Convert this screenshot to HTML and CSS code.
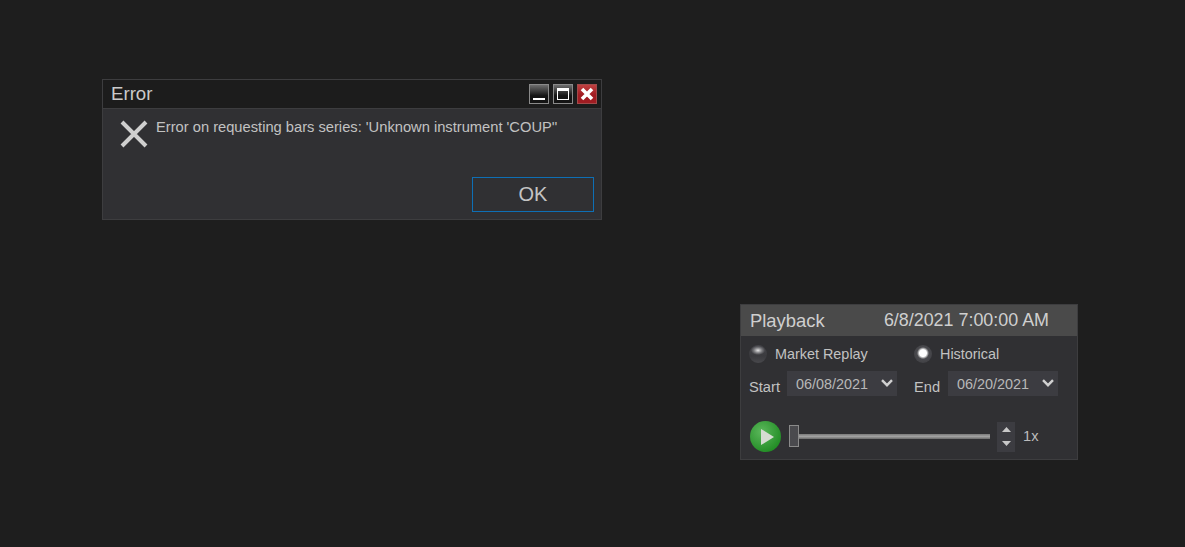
FILE: index.html
```html
<!DOCTYPE html>
<html lang="en">
<head>
<meta charset="utf-8">
<title>Error and Playback</title>
<link rel="stylesheet" href="styles.css">
</head>
<body>
<section class="window error-window">
  <header class="error-title">
    <span class="error-title-text">Error</span>
    <div class="win-buttons">
      <button class="win-btn" aria-label="Minimize"><svg width="18" height="18" viewBox="0 0 18 18"><rect x="3" y="13" width="12" height="2" fill="#fff"/></svg></button>
      <button class="win-btn" aria-label="Maximize"><svg width="18" height="18" viewBox="0 0 18 18"><path d="M3 3h12v12H3zM4 6v8h10V6z" fill="#fff" fill-rule="evenodd"/></svg></button>
      <button class="win-btn win-close" aria-label="Close"><svg width="18" height="18" viewBox="0 0 18 18"><path d="M4 4l10 10M14 4L4 14" stroke="#fff" stroke-width="3.6" fill="none"/></svg></button>
    </div>
  </header>
  <div class="error-body">
    <div class="error-message">
      <svg class="error-icon" width="30" height="30" viewBox="0 0 30 30"><path d="M3 3l24 24M27 3L3 27" stroke="#cfcfcf" stroke-width="4" fill="none"/></svg>
      <p class="error-text">Error on requesting bars series: 'Unknown instrument 'COUP''</p>
    </div>
    <div class="error-actions"><button class="ok-btn">OK</button></div>
  </div>
</section>

<section class="window playback-window">
  <header class="playback-title">
    <span class="playback-name">Playback</span>
    <span class="playback-time">6/8/2021 7:00:00 AM</span>
  </header>
  <div class="playback-body">
    <div class="mode-grid">
      <label class="radio-row"><span class="radio radio-off"></span>Market Replay</label>
      <label class="radio-row"><span class="radio radio-on"></span>Historical</label>
      <div class="date-row">
        <span class="date-label">Start</span>
        <div class="date-select"><span>06/08/2021</span><svg width="12" height="8" viewBox="0 0 12 8"><path d="M1 1.2l5 5 5-5" stroke="#d0d0d0" stroke-width="2.4" fill="none"/></svg></div>
      </div>
      <div class="date-row date-row-end">
        <span class="date-label">End</span>
        <div class="date-select"><span>06/20/2021</span><svg width="12" height="8" viewBox="0 0 12 8"><path d="M1 1.2l5 5 5-5" stroke="#d0d0d0" stroke-width="2.4" fill="none"/></svg></div>
      </div>
    </div>
    <div class="transport">
      <button class="play-btn" aria-label="Play"><svg width="13" height="16" viewBox="0 0 13 16"><path d="M0 0l13 8L0 16z" fill="#d6dcd2"/></svg></button>
      <div class="slider"><div class="slider-track"></div><div class="slider-thumb"></div></div>
      <div class="spinner">
        <svg width="9" height="5" viewBox="0 0 9 5"><path d="M0 5l4.5-5L9 5z" fill="#c8c8c8"/></svg>
        <svg width="9" height="5" viewBox="0 0 9 5"><path d="M0 0l4.5 5L9 0z" fill="#c8c8c8"/></svg>
      </div>
      <span class="speed">1x</span>
    </div>
  </div>
</section>
</body>
</html>
```

FILE: styles.css
```css
* { box-sizing: border-box; }
html, body { margin: 0; height: 100%; }
body {
  width: 1185px;
  height: 547px;
  overflow: hidden;
  background: #1e1e1e;
  color: #cfcfcf;
  font-family: "Liberation Sans", Arial, sans-serif;
  position: relative;
}
.window { position: absolute; border: 1px solid #3d3d3f; background: #303033; }
button { font-family: inherit; padding: 0; margin: 0; }

.error-window { left: 102px; top: 79px; width: 500px; height: 141px; display: flex; flex-direction: column; }
.error-title {
  height: 29px;
  flex: none;
  background: #1c1c1c;
  border-bottom: 1px solid #3d3d3f;
  display: flex;
  align-items: center;
  justify-content: space-between;
  padding: 0 4px 0 8px;
}
.error-title-text { font-size: 18.67px; color: #cacaca; }
.win-buttons { display: flex; gap: 4px; }
.win-btn {
  width: 20px; height: 20px;
  border: 1px solid #8a8a8a;
  background: linear-gradient(#6e6e6e, #141414 60%);
  display: flex; align-items: center; justify-content: center;
}
.win-close { border-color: #a04a4a; background: linear-gradient(#c04040, #a01c22 55%); }
.error-body { flex: 1; display: flex; flex-direction: column; justify-content: space-between; padding: 10px 7px 7px 16px; }
.error-message { display: flex; gap: 7px; }
.error-icon { flex: none; }
.error-text { margin: 0; font-size: 14.7px; line-height: 17px; color: #c2c2c2; }
.error-actions { display: flex; justify-content: flex-end; }
.ok-btn {
  width: 122px; height: 35px;
  border: 1px solid #0e6fb5;
  background: transparent;
  color: #c4c4c4;
  font-size: 20px;
}

.playback-window { left: 740px; top: 304px; width: 338px; height: 156px; display: flex; flex-direction: column; }
.playback-title {
  height: 31px;
  flex: none;
  background: #4a4a4a;
  display: flex;
  align-items: center;
  padding: 0 28px 0 9px;
  justify-content: space-between;
  font-size: 18.4px;
  color: #cfcfcf;
}
.playback-time { font-size: 17.9px; }
.playback-body { flex: 1; padding: 8px 0 0 8px; display: flex; flex-direction: column; }
.mode-grid { display: grid; grid-template-columns: 165px 165px; row-gap: 7px; }
.radio-row { display: flex; align-items: center; gap: 8px; font-size: 14.4px; height: 20px; color: #c2c2c2; }
.radio { width: 18px; height: 18px; border-radius: 50%; flex: none; }
.radio-off { background: radial-gradient(ellipse 7px 4.5px at 50% 30%, #e4e4e4, #77777b 60%, transparent 100%), linear-gradient(#45454a, #3a3a3e 60%, #48484c); }
.radio-on { background: radial-gradient(circle at 50% 45%, #fff 0 3.5px, #4a4a4e 6px, #39393d 100%); }
.date-row { display: flex; align-items: center; gap: 7px; }
.date-row-end { gap: 8px; }
.date-label { font-size: 14.67px; margin-top: 6px; color: #c2c2c2; }
.date-select {
  width: 110px;
  height: 25px;
  background: #3c3c41;
  display: flex; align-items: center; justify-content: space-between;
  padding: 0 4px 0 9px;
  font-size: 14.4px;
  color: #b8b8b8;
}
.date-select svg { margin-bottom: 2px; }
.transport { display: flex; align-items: center; margin-top: 25px; }
.play-btn {
  width: 31px; height: 31px;
  margin-left: 1px;
  border: 0; border-radius: 50%;
  background: radial-gradient(circle at 38% 35%, #5cb85c, #1f8a22 80%);
  display: flex; align-items: center; justify-content: center;
  padding-left: 3px;
}
.slider { position: relative; width: 201px; height: 22px; margin-left: 8px; margin-top: -1px; display: flex; align-items: center; }
.slider-track { width: 100%; height: 5px; background: linear-gradient(#7a7a7a, #a0a0a0 50%, #6a6a6a); }
.slider-thumb { position: absolute; left: 0; top: 0; width: 10px; height: 22px; border: 1px solid #8a8a8a; background: #4a4a4e; }
.spinner {
  width: 18px; height: 30px; margin-left: 7px;
  background: #3c3c41;
  display: flex; flex-direction: column; align-items: center; justify-content: center; gap: 9px;
}
.speed { font-size: 14.67px; margin-left: 8px; margin-bottom: 1px; color: #bcbcbc; }
```
